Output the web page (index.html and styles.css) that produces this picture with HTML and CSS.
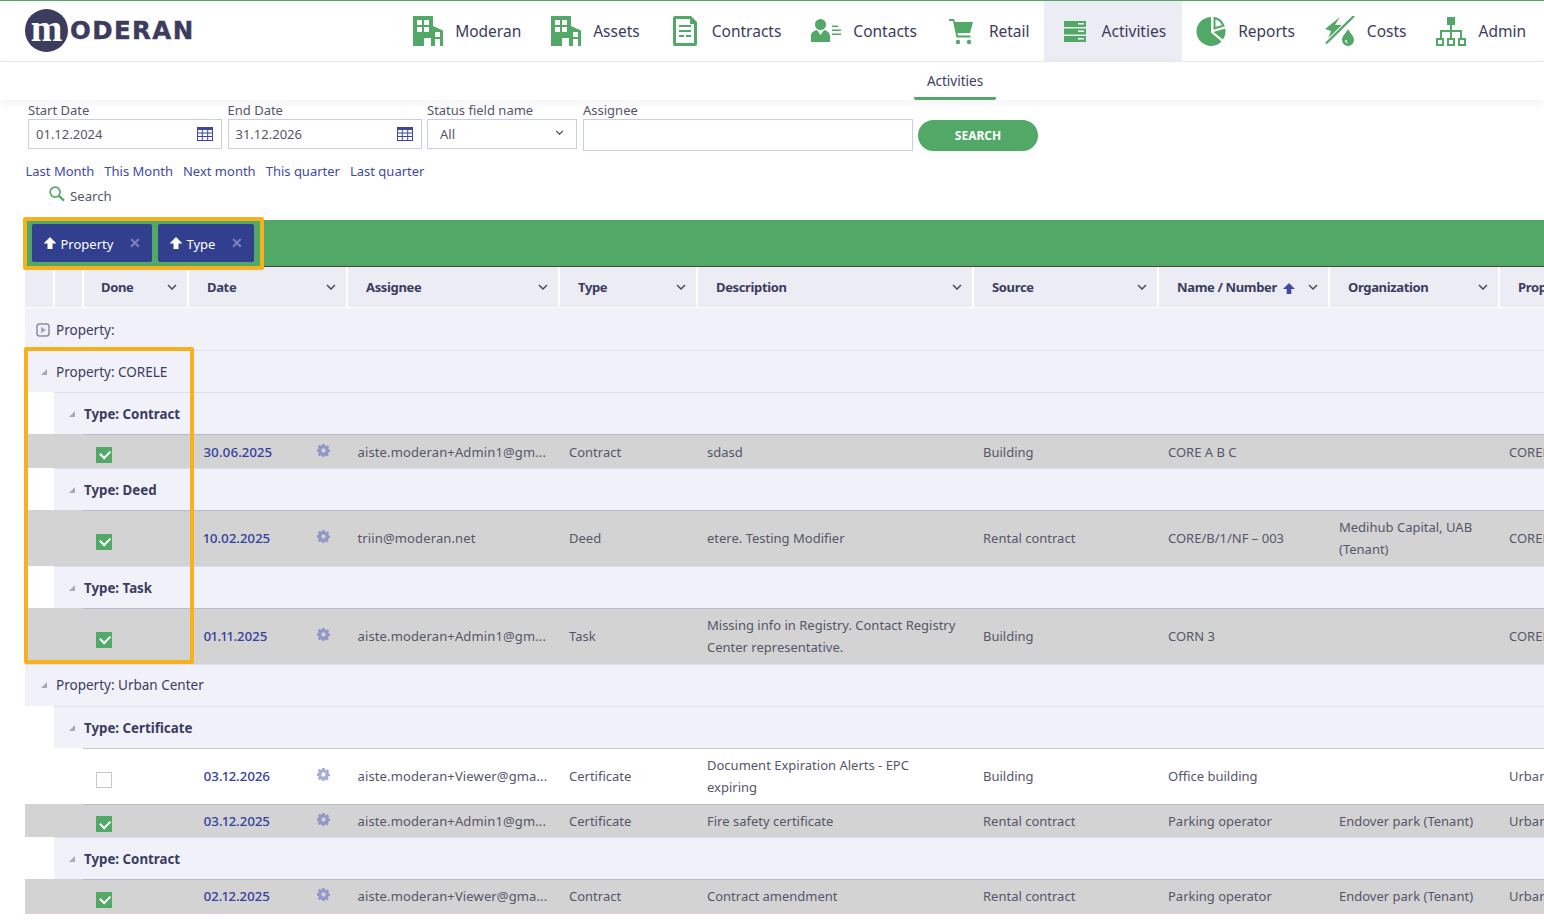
FILE: index.html
```html
<!DOCTYPE html>
<html lang="en">
<head>
<meta charset="utf-8">
<title>Moderan - Activities</title>
<link rel="stylesheet" href="styles.css">
</head>
<body>
<header class="top">
  <div class="brand">
    <span class="brand-mark">m</span><span class="brand-name">ODERAN</span>
  </div>
  <nav class="nav">
    <a class="nav-item"><svg class="nav-icon" viewBox="0 0 30 30"><use href="#building"/></svg>Moderan</a>
    <a class="nav-item"><svg class="nav-icon" viewBox="0 0 30 30"><use href="#building"/></svg>Assets</a>
    <a class="nav-item"><svg class="nav-icon" viewBox="0 0 30 30"><path fill="#52a866" d="M3 2a2 2 0 0 1 2-2h16l6 6v22a2 2 0 0 1-2 2H5a2 2 0 0 1-2-2z"/><path fill="#fff" d="M6 3h14v5h4v19H6z"/><path fill="#52a866" d="M9 9h12v2H9zM9 14h12v2H9zM9 19h5v2H9zM16 19h5v2h-5z"/></svg>Contracts</a>
    <a class="nav-item"><svg class="nav-icon" viewBox="0 0 30 30"><circle cx="9.500" cy="8.500" r="5.500" fill="#52a866"/><path fill="#52a866" d="M0 26v-6c0-3.500 3-5.500 6-6l3.500 5 3.500-5c3 .5 6 2.500 6 6v6z"/><path fill="#52a866" d="M21 9.500h6V11h-6zM21 13.500h9V15h-9zM21 17.500h9V19h-9z"/></svg>Contacts</a>
    <a class="nav-item"><svg class="nav-icon" viewBox="0 0 30 30"><path fill="#52a866" d="M2 3h5l1 3h18l-3 11H10.500l.6 2.500h12.400v2H9.500L6 5H2z"/><circle cx="11" cy="26" r="2.200" fill="#52a866"/><circle cx="22" cy="26" r="2.200" fill="#52a866"/></svg>Retail</a>
    <a class="nav-item is-active"><svg class="nav-icon" viewBox="0 0 30 30"><path fill="#52a866" d="M4 5h22v6H4zM4 12.500h22v6H4zM4 20h22v6H4z"/><path fill="#fff" d="M18 7h6v1.500h-6zM18 14.500h6V16h-6zM18 22h6v1.500h-6z"/></svg>Activities</a>
    <a class="nav-item"><svg class="nav-icon" viewBox="0 0 30 30"><path fill="#52a866" d="M15 1A14.500 14.500 0 1 0 25.500 25.500L15 16.500z"/><path fill="#52a866" d="M17.500 16 29.200 12.500A14.500 14.500 0 0 1 27 23.500z"/><path fill="none" stroke="#52a866" stroke-width="2" d="M18.500 2a12.500 12.500 0 0 1 9 7.700l-9 2.600z"/></svg>Reports</a>
    <a class="nav-item"><svg class="nav-icon" viewBox="0 0 30 30"><path fill="#52a866" d="M0 13 15 1l-5 8h7L3 23l3-8z"/><path fill="none" stroke="#fff" stroke-width="4" d="M28 1 1 27"/><path fill="none" stroke="#52a866" stroke-width="2.400" d="M29 0 1 27.500"/><path fill="#52a866" d="M23 13c2 4 6 7 6 11a6 6 0 0 1-12 0c0-4 4-7 6-11z"/><path fill="#fff" d="M20 24c0 2 1 3 3 3.500-1-1-1.500-2-1.500-3.500z"/></svg>Costs</a>
    <a class="nav-item"><svg class="nav-icon" viewBox="0 0 30 30"><path fill="#52a866" d="M11 1h8v8h-8zM14 9h2v5h10v8h-2v-6H16v6h-2v-6H6v6H4v-8h10z"/><path fill="none" stroke="#52a866" stroke-width="2" d="M1 23h6v6H1zM12 23h6v6h-6zM23 23h6v6h-6z"/></svg>Admin</a>
  </nav>
</header>

<div class="subnav"><a class="subnav-tab">Activities</a></div>

<section class="filters">
  <div class="field field-date">
    <label class="field-label">Start Date</label>
    <div class="control"><span>01.12.2024</span><svg class="cal" viewBox="0 0 16 14"><use href="#calendar"/></svg></div>
  </div>
  <div class="field field-date">
    <label class="field-label">End Date</label>
    <div class="control"><span>31.12.2026</span><svg class="cal" viewBox="0 0 16 14"><use href="#calendar"/></svg></div>
  </div>
  <div class="field field-status">
    <label class="field-label">Status field name</label>
    <div class="control control-select"><span>All</span><svg class="chev chev-sm" viewBox="0 0 10 6"><use href="#chevron"/></svg></div>
  </div>
  <div class="field field-assignee">
    <label class="field-label">Assignee</label>
    <div class="control control-tall"></div>
  </div>
  <button class="search-btn">SEARCH</button>
</section>

<div class="quick-links">
  <a>Last Month</a><a>This Month</a><a>Next month</a><a>This quarter</a><a>Last quarter</a>
</div>
<div class="search-toggle">
  <svg class="search-icon" viewBox="0 0 17 17"><circle cx="6.500" cy="6.500" r="5.300" fill="none" stroke="#52a866" stroke-width="1.800"/><path d="m10.500 10.500 5.500 5" stroke="#52a866" stroke-width="2.400" fill="none"/></svg>
  <span>Search</span>
</div>

<main class="grid-wrap">
  <div class="group-bar">
    <div class="chip chip-property"><svg class="chip-arrow" viewBox="0 0 13 12"><use href="#arrow"/></svg><span>Property</span><span class="chip-x">✕</span></div>
    <div class="chip chip-type"><svg class="chip-arrow" viewBox="0 0 13 12"><use href="#arrow"/></svg><span>Type</span><span class="chip-x">✕</span></div>
  </div>
  <table class="grid">
    <colgroup>
      <col class="c-g1"><col class="c-g2"><col class="c-done"><col class="c-date"><col class="c-assignee"><col class="c-type"><col class="c-desc"><col class="c-source"><col class="c-name"><col class="c-org"><col class="c-prop">
    </colgroup>
    <thead>
      <tr>
        <th></th><th></th>
        <th><div class="th-in th-done">Done<svg class="chev" viewBox="0 0 10 6"><use href="#chevron"/></svg></div></th>
        <th><div class="th-in">Date<svg class="chev" viewBox="0 0 10 6"><use href="#chevron"/></svg></div></th>
        <th><div class="th-in">Assignee<svg class="chev" viewBox="0 0 10 6"><use href="#chevron"/></svg></div></th>
        <th><div class="th-in">Type<svg class="chev" viewBox="0 0 10 6"><use href="#chevron"/></svg></div></th>
        <th><div class="th-in">Description<svg class="chev" viewBox="0 0 10 6"><use href="#chevron"/></svg></div></th>
        <th><div class="th-in">Source<svg class="chev" viewBox="0 0 10 6"><use href="#chevron"/></svg></div></th>
        <th><div class="th-in"><span class="th-sort">Name / Number<svg class="sort" viewBox="0 0 13 12"><use href="#arrow"/></svg></span><svg class="chev" viewBox="0 0 10 6"><use href="#chevron"/></svg></div></th>
        <th><div class="th-in">Organization<svg class="chev" viewBox="0 0 10 6"><use href="#chevron"/></svg></div></th>
        <th><div class="th-in">Property</div></th>
      </tr>
    </thead>
    <tbody>
      <tr class="g1"><td colspan="11"><div class="g-in"><svg class="play" viewBox="0 0 14 14"><rect x="1" y="1" width="12" height="12" rx="2.500" fill="#f0f1f9" stroke="#8d8d96" stroke-width="1.500"/><path d="M5 3.800v6.400L10 7z" fill="#9fa3d0"/></svg>Property:</div></td></tr>

      <tr class="g1"><td colspan="11"><div class="g-in"><i class="tri"></i>Property: CORELE</div></td></tr>
      <tr class="g2"><td class="blank"></td><td colspan="10"><div class="g-in"><i class="tri"></i>Type: Contract</div></td></tr>
      <tr class="row grey h34">
        <td></td><td></td><td class="td-check"><i class="cb on"></i></td>
        <td class="td-date"><div class="date-in"><a>30.06.2025</a><svg class="gear" viewBox="0 0 14 14"><use href="#gear"/></svg></div></td>
        <td class="td-mail">aiste.moderan+Admin1@gm...</td><td>Contract</td><td>sdasd</td><td>Building</td><td>CORE A B C</td><td></td><td>CORELE</td>
      </tr>
      <tr class="g2"><td class="blank"></td><td colspan="10"><div class="g-in"><i class="tri"></i>Type: Deed</div></td></tr>
      <tr class="row grey h56">
        <td></td><td></td><td class="td-check"><i class="cb on"></i></td>
        <td class="td-date"><div class="date-in"><a>10.02.2025</a><svg class="gear" viewBox="0 0 14 14"><use href="#gear"/></svg></div></td>
        <td class="td-mail">triin@moderan.net</td><td>Deed</td><td>etere. Testing Modifier</td><td>Rental contract</td><td>CORE/B/1/NF – 003</td><td class="wrap">Medihub Capital, UAB (Tenant)</td><td>CORELE</td>
      </tr>
      <tr class="g2"><td class="blank"></td><td colspan="10"><div class="g-in"><i class="tri"></i>Type: Task</div></td></tr>
      <tr class="row grey h56">
        <td></td><td></td><td class="td-check"><i class="cb on"></i></td>
        <td class="td-date"><div class="date-in"><a>01.11.2025</a><svg class="gear" viewBox="0 0 14 14"><use href="#gear"/></svg></div></td>
        <td class="td-mail">aiste.moderan+Admin1@gm...</td><td>Task</td><td class="wrap">Missing info in Registry. Contact Registry Center representative.</td><td>Building</td><td>CORN 3</td><td></td><td>CORELE</td>
      </tr>

      <tr class="g1 g-high"><td colspan="11"><div class="g-in"><i class="tri"></i>Property: Urban Center</div></td></tr>
      <tr class="g2"><td class="blank"></td><td colspan="10"><div class="g-in"><i class="tri"></i>Type: Certificate</div></td></tr>
      <tr class="row h56">
        <td></td><td></td><td class="td-check"><i class="cb"></i></td>
        <td class="td-date"><div class="date-in"><a>03.12.2026</a><svg class="gear" viewBox="0 0 14 14"><use href="#gear"/></svg></div></td>
        <td class="td-mail">aiste.moderan+Viewer@gma...</td><td>Certificate</td><td class="wrap">Document Expiration Alerts - EPC expiring</td><td>Building</td><td>Office building</td><td></td><td>Urban Center</td>
      </tr>
      <tr class="row grey h33">
        <td></td><td></td><td class="td-check"><i class="cb on"></i></td>
        <td class="td-date"><div class="date-in"><a>03.12.2025</a><svg class="gear" viewBox="0 0 14 14"><use href="#gear"/></svg></div></td>
        <td class="td-mail">aiste.moderan+Admin1@gm...</td><td>Certificate</td><td>Fire safety certificate</td><td>Rental contract</td><td>Parking operator</td><td>Endover park (Tenant)</td><td>Urban Center</td>
      </tr>
      <tr class="g2"><td class="blank"></td><td colspan="10"><div class="g-in"><i class="tri"></i>Type: Contract</div></td></tr>
      <tr class="row grey h34 lift">
        <td></td><td></td><td class="td-check"><i class="cb on"></i></td>
        <td class="td-date"><div class="date-in"><a>02.12.2025</a><svg class="gear" viewBox="0 0 14 14"><use href="#gear"/></svg></div></td>
        <td class="td-mail">aiste.moderan+Viewer@gma...</td><td>Contract</td><td>Contract amendment</td><td>Rental contract</td><td>Parking operator</td><td>Endover park (Tenant)</td><td>Urban Center</td>
      </tr>
      <tr class="row-end"><td colspan="11"></td></tr>
    </tbody>
  </table>
  <div class="mark mark-chips"></div>
  <div class="mark mark-group"></div>
</main>

<svg class="defs" aria-hidden="true">
  <defs>
    <symbol id="building" viewBox="0 0 30 30">
      <path fill="#52a866" fill-rule="evenodd" d="M0 0h20v10l10 4.500V30H18v-8h-7v8H0zM4 4v5h5V4zM11 4v5h5V4zM4 11v5h5v-5zM11 11v5h5v-5zM22 16v5h5v-5zM22 23v7h5v-7z"/>
    </symbol>
    <symbol id="calendar" viewBox="0 0 16 14">
      <path fill="#3b47a0" d="M0 0h16v14H0z"/>
      <path fill="#fff" d="M1 3h3.800v2.500H1zM5.800 3h4.400v2.500H5.800zM11.200 3H15v2.500h-3.800zM1 6.500h3.800V9H1zM5.800 6.500h4.400V9H5.800zM11.200 6.500H15V9h-3.800zM1 10h3.800v3H1zM5.800 10h4.400v3H5.800zM11.200 10H15v3h-3.800z"/>
    </symbol>
    <symbol id="chevron" viewBox="0 0 10 6">
      <path d="M1 1l4 4 4-4" fill="none" stroke="#4a4a66" stroke-width="1.500"/>
    </symbol>
    <symbol id="arrow" viewBox="0 0 13 12">
      <path fill="currentColor" d="M6.500 0 13 6.500H9V12H4V6.500H0z"/>
    </symbol>
    <symbol id="gear" viewBox="0 0 14 14">
      <path fill="currentColor" fill-rule="evenodd" d="M5.700 0h2.600l.3 1.800 1.200.5 1.500-1 1.800 1.800-1 1.500.5 1.200 1.400.3v2.600l-1.800.3-.5 1.200 1 1.500-1.800 1.800-1.500-1-1.200.5-.3 1.500H5.700l-.3-1.800-1.200-.5-1.500 1-1.800-1.800 1-1.500-.5-1.200L0 8.300V5.700l1.400-.3.5-1.200-1-1.500 1.800-1.800 1.500 1 1.200-.5zM7 4.700a2.300 2.300 0 1 0 0 4.600 2.300 2.300 0 0 0 0-4.600z"/>
    </symbol>
  </defs>
</svg>
</body>
</html>
```
FILE: styles.css
```css
* { box-sizing: border-box; }
html, body { margin: 0; padding: 0; overflow: hidden; height: 920px; background: #fff; }
body { font-family: "Noto Sans", "Open Sans", sans-serif; font-size: 13px; color: #55566a; }
a { color: inherit; text-decoration: none; }
.defs { width: 0; height: 0; position: absolute; }

.top { display: flex; justify-content: space-between; height: 62px; border-top: 1px solid #52a866; border-bottom: 1px solid #e9e9f2; padding: 0 3px 0 25px; }
.brand { display: flex; align-items: center; }
.brand-mark { width: 43px; height: 43px; border-radius: 50%; background: #3b3c5e; color: #fff; display: flex; align-items: center; justify-content: center; font: 700 38px/36px "Liberation Serif", serif; padding-bottom: 5px; margin-top: -1px; }
.brand-name { font: 700 24.500px/1 "DejaVu Sans", sans-serif; color: #3b3c5e; margin: 0 0 0 2px; letter-spacing: 1.400px; -webkit-text-stroke: .4px #3b3c5e; }
.nav { display: flex; }
.nav-item { display: flex; align-items: center; gap: 12px; padding: 0 15px; font-size: 15.500px; color: #3b3c5e; }
.nav-item.is-active { background: #ebecf4; padding: 0 16px; margin: 0 -1px; }
.nav-icon { width: 30px; height: 30px; flex: none; }

.subnav { height: 38px; display: flex; justify-content: flex-start; padding-left: 914px; box-shadow: 0 3px 8px rgba(70, 70, 140, .07); position: relative; }
.subnav-tab { width: 82px; height: 38px; border-bottom: 3px solid #52a866; text-align: center; line-height: 38px; font-size: 13.500px; color: #3b3c5e; border-radius: 0 0 2px 2px; }

.filters { display: flex; align-items: flex-start; padding: 2px 0 0 28px; height: 51px; }
.field-label { display: block; height: 17px; line-height: 17px; font-size: 13px; color: #55566a; }
.field-date { width: 194px; margin-right: 5.500px; }
.field-status { width: 150px; margin-right: 6px; }
.field-assignee { width: 330px; margin-right: 5px; }
.control { height: 30px; border: 1px solid #c9cde6; display: flex; align-items: center; justify-content: space-between; padding: 0 8px 0 7px; font-size: 13px; }
.control-select { padding: 0 12px 0 12px; }
.control-tall { height: 32px; }
.cal { width: 16px; height: 14px; }
.chev { width: 10px; height: 6px; flex: none; }
.chev-sm { width: 9px; height: 5px; margin-top: -3px; }
.search-btn { margin-top: 18px; width: 120px; height: 31px; border: 0; border-radius: 16px; background: #52a866; color: #fff; font: 700 12px "Noto Sans", sans-serif; }

.quick-links { display: flex; gap: 10px; padding-left: 25.500px; height: 24px; margin-top: 9px; line-height: 22px; font-size: 13px; color: #3f4aa0; }
.search-toggle { display: flex; align-items: center; gap: 5px; padding: 0 0 2px 49px; height: 25px; font-size: 13.200px; }
.search-icon { width: 16px; height: 16px; margin-top: -4px; }

.grid-wrap { position: relative; margin: 11px 0 0 25px; width: 1519px; height: 700px; }
.group-bar { height: 47px; background: #52a866; border-bottom: 1px solid #444; display: flex; gap: 6px; padding: 4px 0 0 7px; }
.chip { height: 38px; background: #323e8e; color: #fff; display: flex; align-items: center; padding: 1px 11px 0 10.500px; border-radius: 2px; font-size: 13px; }
.chip-property { width: 120px; }
.chip-type { width: 96px; }
.chip-arrow { width: 14px; height: 12px; margin: -1px 4px 0 0; color: #fff; }
.chip-x { margin: -2px 0 0 auto; color: #7d84b8; font-size: 14px; font-weight: 700; }

.grid { border-collapse: separate; border-spacing: 0; table-layout: fixed; width: 1674px; }
.c-g1, .c-g2 { width: 29px; }
.c-done { width: 105px; }
.c-date { width: 159px; }
.c-assignee { width: 212px; }
.c-type { width: 138px; }
.c-desc { width: 276px; }
.c-source { width: 185px; }
.c-name { width: 171px; }
.c-org { width: 170px; }
.c-prop { width: 200px; }

.grid th { height: 41px; background: #ebecf4; border-left: 1px solid #fff; border-right: 1px solid #fff; border-bottom: 1px solid #fff; padding: 0; font-size: 13px; font-weight: 700; letter-spacing: -.35px; color: #3b3c5e; text-align: left; }
.grid th:first-child { border-left: 0; }
.th-in { display: flex; align-items: center; justify-content: space-between; padding: 0 10px 0 18px; white-space: nowrap; }
.th-done { padding-left: 17px; }
.th-sort { display: flex; align-items: center; gap: 6px; }
.sort { width: 12px; height: 11px; color: #3f4aa0; margin-top: 3px; }

.grid td { padding: 0; }
.g1 td, .g2 td { height: 42px; background: #f0f1f9; border-top: 1px solid #dcdef0; color: #3b3c5e; }
tbody .g1:first-child td { border-top-color: #f0f1f9; }
.g2 td { font-weight: 700; }
.g2 td.blank { background: #fff; border-top: 0; }
.g-in { display: flex; align-items: center; gap: 9px; padding-left: 15px; font-size: 13.500px; white-space: nowrap; }
.g2 .g-in { padding-left: 15px; font-size: 13.300px; }
.g-high td { padding-bottom: 2px; }
.tri { width: 0; height: 0; border-style: solid; border-width: 0 0 6px 6px; border-color: transparent transparent #a9a9ad transparent; }
.play { width: 14px; height: 14px; margin: 0 -3px 0 -5px; }
.g1 .g-in { padding-left: 16px; }

.row td { white-space: nowrap; font-size: 13px; line-height: 22px; padding: 0 10.500px 0 10px; border-top: 1px solid #c3c5d6; color: #55566a; }
.row td:nth-child(-n+2) { border-top: 0; padding: 0; }
.row.grey td { background: #d3d3d3; border-top-color: #b8bacb; }
.row.h34 td { height: 34px; }
.row.h33 td { height: 33px; }
.row.h56 td { height: 56px; padding-bottom: 2px; }
.row.lift td { padding-bottom: 2px; }
.row td.wrap { white-space: normal; padding-right: 16px; }
.row td.td-mail { letter-spacing: .13px; padding-left: 10.500px; }
.row td.td-check { padding: 6px 0 0 13px; }
.row.h56 td.td-check { padding-bottom: 0; }
.row.lift td.td-check { padding-bottom: 0; }
.row td.td-date { padding-left: 15.500px; padding-right: 0; }
.date-in { display: flex; align-items: center; justify-content: space-between; padding-right: 17px; }
.date-in a { color: #35409e; font-weight: 500; font-size: 13.300px; font-variant-numeric: proportional-nums; }
.gear { width: 13px; height: 13px; color: #a7acd8; margin-top: -3px; }
.grey .gear { color: #9297c8; }
.cb { display: block; width: 16px; height: 16px; border: 1px solid #c9c9c9; background: #fff; position: relative; }
.cb.on { background: #52a866; border-color: #52a866; }
.cb.on::after { content: ""; position: absolute; left: 3px; top: 2.500px; width: 8px; height: 4.500px; border-left: 2px solid #fff; border-bottom: 2px solid #fff; transform: rotate(-45deg); }
.row-end td { height: 2px; border-top: 1px solid #eccdd4; }

.mark { position: absolute; border: 4px solid #f7b11e; border-radius: 2px; pointer-events: none; }
.mark-chips { left: -2px; top: -3px; width: 241px; height: 53px; }
.mark-group { left: -1px; top: 127px; width: 170px; height: 317px; }
```
